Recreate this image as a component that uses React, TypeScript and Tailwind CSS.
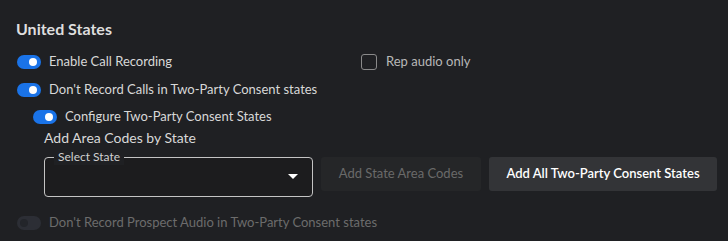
import React from "react";

function Toggle({ on, disabled }: { on?: boolean; disabled?: boolean }) {
  if (disabled) {
    return (
      <div className="relative h-[14px] w-[24px] rounded-full bg-[#2c2e35] shrink-0">
        <div className="absolute left-[3px] top-[3px] h-[8px] w-[8px] rounded-full bg-[#23252a]" />
      </div>
    );
  }
  return (
    <div className="relative h-[14px] w-[24px] rounded-full bg-[#1a73e8] shrink-0">
      <div className={`absolute top-[3px] h-[8px] w-[8px] rounded-full bg-white ${on ? "right-[4px]" : "left-[4px]"}`} />
    </div>
  );
}

export default function App() {
  return (
    <div
      className="w-[728px] h-[241px] bg-[#1f2023] text-[#d8d8d8] overflow-hidden"
      style={{ fontFamily: "Lato, 'Noto Sans', sans-serif" }}
    >
      <div className="pl-[16px] pt-[17px]">
        <div className="text-[16px] font-bold leading-[24px] text-[#dedede]">United States</div>
        <div className="mt-[14px] flex items-center h-[14px]">
          <div className="flex items-center gap-[8px] ml-[1px] w-[344px]">
            <Toggle on />
            <span className="text-[13px]">Enable Call Recording</span>
          </div>
          <div className="flex items-center gap-[9px]">
            <div className="h-[16px] w-[16px] rounded-[3px] border border-[#8a8a8a]" />
            <span className="text-[13px] text-[#b8b8b8]">Rep audio only</span>
          </div>
        </div>
        <div className="mt-[14px] flex items-center gap-[8px] ml-[1px] h-[14px]">
          <Toggle on />
          <span className="text-[13px]">Don't Record Calls in Two-Party Consent states</span>
        </div>
        <div className="mt-[13px] flex items-center gap-[8px] ml-[17px] h-[14px]">
          <Toggle on />
          <span className="text-[13px]">Configure Two-Party Consent States</span>
        </div>
        <div className="ml-[28px] mt-[5px] text-[14px] leading-[18px]">Add Area Codes by State</div>
        <div className="ml-[28px] mt-[10px] flex items-start">
          <div className="relative h-[40px] w-[269px] rounded-[4px] border border-[#c4c4c4] bg-[#1c1c1e]">
            <span className="absolute -top-[9px] left-[9px] bg-[#1f2023] px-[4px] text-[12px] leading-[16px] text-[#d0d0d0]">
              Select State
            </span>
            <svg className="absolute right-[14px] top-[16px]" width="10" height="6" viewBox="0 0 10 6">
              <path d="M0 0 L10 0 L5 5 Z" fill="#ffffff" />
            </svg>
          </div>
          <div className="ml-[8px] h-[34px] w-[160px] rounded-[3px] bg-[#252628] flex items-center justify-center text-[13px] text-[#6a6a6a]">
            Add State Area Codes
          </div>
          <div className="ml-[8px] h-[34px] w-[228px] rounded-[3px] bg-[#333437] flex items-center justify-center text-[13px] font-semibold text-white">
            Add All Two-Party Consent States
          </div>
        </div>
        <div className="mt-[19px] flex items-center gap-[8px] ml-[1px] h-[14px]">
          <Toggle disabled />
          <span className="text-[13px] text-[#6c6c6c]">Don't Record Prospect Audio in Two-Party Consent states</span>
        </div>
      </div>
    </div>
  );
}
